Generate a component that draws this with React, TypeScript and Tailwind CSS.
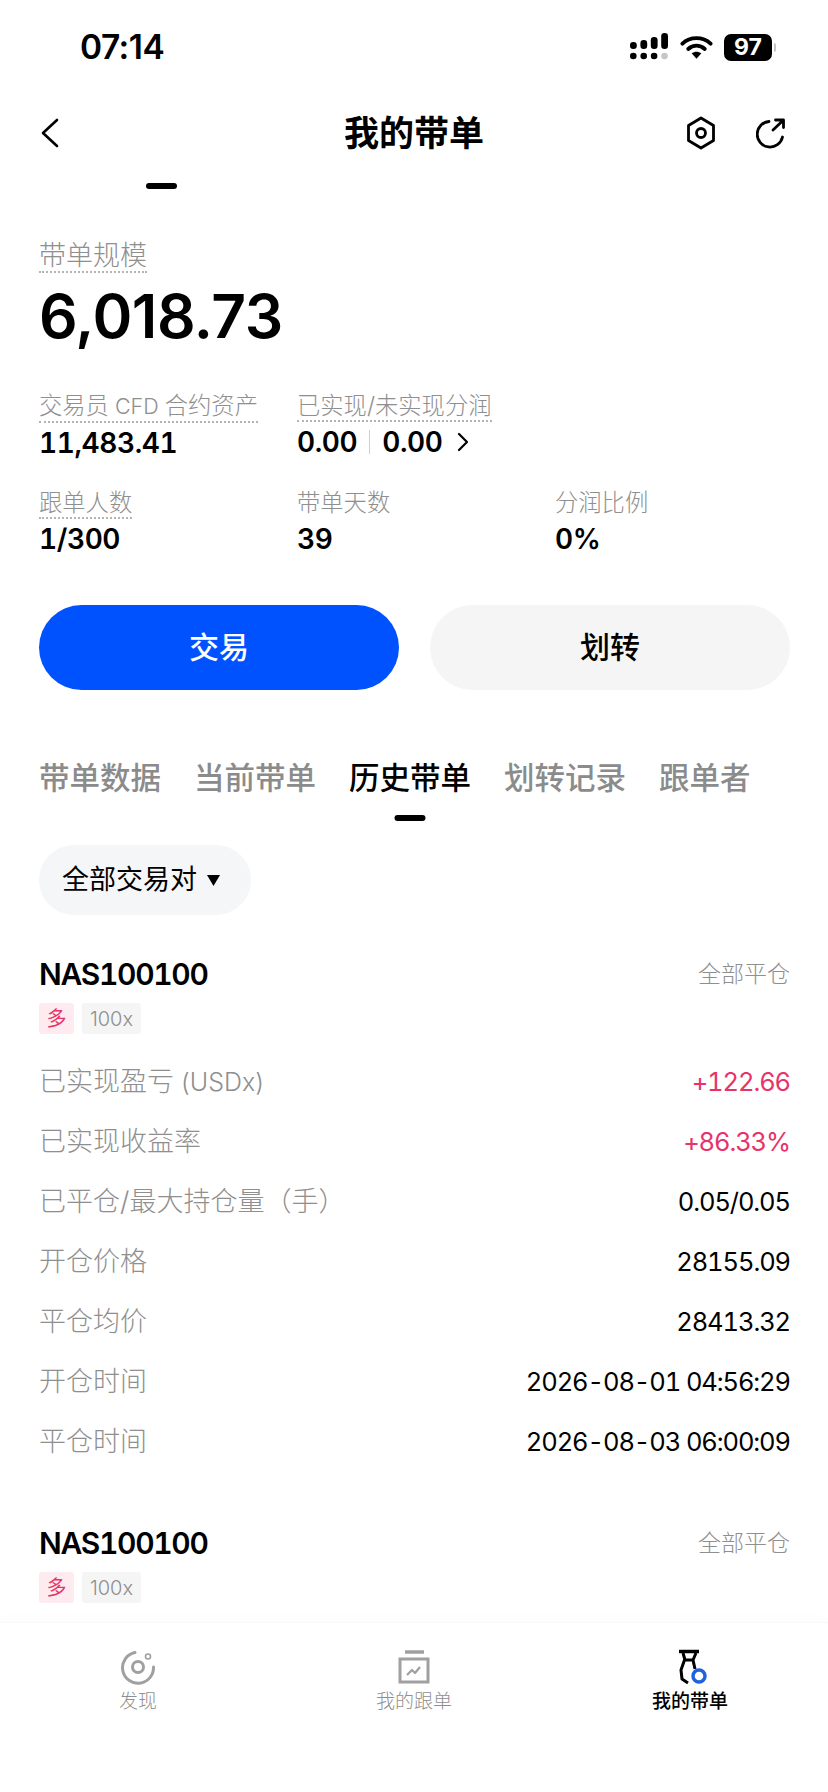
import React from "react";

const FONT = "[font-family:Inter,'Noto_Sans_CJK_SC',sans-serif]";

function Signal() {
  const bars = [
    [0, 13, 7],
    [10.4, 11, 9],
    [20.800, 8, 12],
    [31.200, 4, 16],
  ];
  return (
    <svg width="39" height="30" viewBox="0 0 39 30">
      {bars.map(([x, y, h], i) => (
        <rect key={i} x={x} y={y - 3} width="6.800" height={h} rx="3.200" fill="#000" />
      ))}
      {[0, 10.4, 20.8, 31.2].map((x, i) => (
        <circle key={x} cx={x + 3.3} cy="24" r="3.300" fill={i === 3 ? "#c6c6c6" : "#000"} />
      ))}
    </svg>
  );
}

function Wifi() {
  return (
    <svg width="33" height="26" viewBox="0 0 34 26" fill="none" stroke="#000" strokeLinecap="round">
      <path d="M2.500 9.500C10.500 2 23.500 2 31.500 9.500" strokeWidth="4" />
      <path d="M8.500 15C13.500 10.500 20.500 10.500 25.500 15" strokeWidth="4" />
      <path d="M17 25l-5-5.500c3-2.200 7-2.200 10 0z" fill="#000" stroke="none" />
    </svg>
  );
}

function Stat({ label, dotted, children }: { label: React.ReactNode; dotted?: boolean; children: React.ReactNode }) {
  return (
    <div className="flex flex-col items-start">
      <span
        className={`text-[23.300px] leading-[27px] font-light text-[#8f8f8f] pb-[1px] ${
          dotted ? "border-b-2 border-dotted border-[#b4b4b4]" : "border-b-2 border-transparent"
        }`}
      >
        {label}
      </span>
      <div className="mt-[3px] flex items-center text-[28px] leading-[34px] font-semibold tabular-nums tracking-[-0.4px] text-black">{children}</div>
    </div>
  );
}

function Row({ label, value, color }: { label: React.ReactNode; value: string; color?: string }) {
  return (
    <div className="flex h-[60px] items-center justify-between">
      <span className="text-[27px] font-light text-[#8f8f8f]">{label}</span>
      <span className={`text-[25.500px] tabular-nums tracking-[-1.1px] ${color ?? "text-black"}`}>{value}</span>
    </div>
  );
}

function CardHead() {
  return (
    <div>
      <div className="flex items-center justify-between">
        <span className="text-[30px] leading-[36px] font-semibold tabular-nums tracking-[-1.3px] text-black">NAS100100</span>
        <span className="text-[23px] leading-[36px] font-light text-[#8f8f8f]">全部平仓</span>
      </div>
      <div className="mt-[11px] flex gap-[8px]">
        <span className="flex h-[31px] w-[35px] items-center justify-center rounded-[3px] bg-[#fdebf0] text-[20px] text-[#e8336a]">多</span>
        <span className="flex h-[31px] w-[59px] items-center justify-center rounded-[3px] bg-[#f5f5f5] text-[20px] font-light text-[#8f8f8f]">100x</span>
      </div>
    </div>
  );
}

export default function App() {
  const tabs = ["带单数据", "当前带单", "历史带单", "划转记录", "跟单者"];
  return (
    <div className={`flex h-[1792px] w-[828px] flex-col overflow-hidden bg-white text-black ${FONT}`}>
      <div className="flex-1 overflow-hidden">
        {/* status bar */}
        <div className="flex h-[94px] items-center justify-between pl-[80px] pr-[52px]">
          <span className="text-[33.500px] font-semibold tracking-[-0.5px]">07:14</span>
          <div className="flex items-center gap-[11px]">
            <Signal />
            <Wifi />
            <div className="flex items-center">
              <span className="flex h-[27px] w-[48px] items-center justify-center rounded-[7px] bg-black text-[23px] font-bold text-white">97</span>
              <span className="ml-[2px] h-[9px] w-[2px] rounded-r-full bg-[#c4c4c4]" />
            </div>
          </div>
        </div>
        {/* header */}
        <div className="relative flex h-[78px] items-center justify-between pl-[40px] pr-[42px]">
          <svg width="20" height="32" viewBox="0 0 20 32" fill="none" stroke="#000" strokeWidth="2.600" strokeLinecap="round" strokeLinejoin="round">
            <path d="M17 3L3 16l14 13" />
          </svg>
          <span className="absolute left-1/2 -translate-x-1/2 text-[35px] font-semibold">我的带单</span>
          <div className="flex items-center gap-[40px]">
            <svg width="30" height="34" viewBox="0 0 30 34" fill="none" stroke="#000" strokeWidth="2.800" strokeLinejoin="round">
              <path d="M15 2l12.500 7.500v15L15 32 2.500 24.500v-15z" />
              <circle cx="15" cy="17" r="4.500" />
            </svg>
            <svg width="30" height="32" viewBox="0 0 30 32" fill="none" stroke="#000" strokeWidth="2.800" strokeLinecap="round" strokeLinejoin="round">
              <path d="M13 4.500A12.800 12.800 0 1 0 26.500 20" />
              <path d="M17 13L27 3.500M19.500 3H27.500V10.500" />
            </svg>
          </div>
        </div>
        <div className="ml-[146px] mt-[11px] h-[6px] w-[31px] rounded-full bg-black" />

        {/* scale */}
        <div className="mt-[52px] pl-[39px] pr-[38px]">
          <span className="inline-block border-b-2 border-dotted border-[#b4b4b4] text-[27px] leading-[30px] font-light text-[#8f8f8f]">带单规模</span>
          <div className="mt-[7px] text-[60.500px] leading-[72px] font-semibold tracking-[-0.5px]">6,018.73</div>
        </div>

        {/* stats */}
        <div className="mt-[40px] grid grid-cols-[258px_258px_1fr] gap-y-[29px] pl-[39px] pr-[38px]">
          <Stat label={<>交易员<span className="text-[21.500px]"> CFD </span>合约资产</>} dotted>11,483.41</Stat>
          <Stat label="已实现/未实现分润" dotted>
            <span>0.00</span>
            <span className="mx-[12px] h-[24px] w-[1px] bg-[#cfcfcf]" />
            <span>0.00</span>
            <svg className="ml-[14px]" width="12" height="20" viewBox="0 0 12 20" fill="none" stroke="#000" strokeWidth="2.200" strokeLinecap="round" strokeLinejoin="round">
              <path d="M2 2l8 8-8 8" />
            </svg>
          </Stat>
          <div />
          <Stat label="跟单人数" dotted>1/300</Stat>
          <Stat label="带单天数">39</Stat>
          <Stat label="分润比例">0%</Stat>
        </div>

        {/* buttons */}
        <div className="mt-[49px] flex gap-[31px] pl-[39px] pr-[38px]">
          <button className="flex h-[85px] w-[360px] items-center justify-center rounded-full bg-[#0052ff] text-[30px] font-medium text-white">交易</button>
          <button className="flex h-[85px] flex-1 items-center justify-center rounded-full bg-[#f5f5f5] text-[30px] font-medium text-black">划转</button>
        </div>

        {/* tabs */}
        <div className="mt-[65px] flex gap-[33px] pl-[39px] pr-[38px]">
          {tabs.map((t, i) => (
            <div key={t} className="relative h-[52px]">
              <span className={`text-[30.500px] leading-[46px] font-medium ${i === 2 ? "text-black" : "text-[#8b8b8b]"}`}>{t}</span>
              {i === 2 && <span className="absolute left-1/2 top-[60px] h-[6px] w-[31px] -translate-x-1/2 rounded-full bg-black" />}
            </div>
          ))}
        </div>

        {/* filter */}
        <div className="mt-[38px] pl-[39px] pr-[38px]">
          <div className="flex h-[70px] w-[212px] items-center gap-[10px] rounded-full bg-[#f5f6f7] pl-[23px]">
            <span className="text-[27px]">全部交易对</span>
            <svg width="13" height="11" viewBox="0 0 13 11">
              <path d="M0 0h13L6.500 11z" fill="#000" />
            </svg>
          </div>
        </div>

        {/* card 1 */}
        <div className="mt-[41px] pl-[39px] pr-[38px]">
          <CardHead />
          <div className="mt-[18px]">
            <Row label={<>已实现盈亏<span className="text-[25px]"> (USDx)</span></>} value="+122.66" color="text-[#e8336a]" />
            <Row label="已实现收益率" value="+86.33%" color="text-[#e8336a]" />
            <Row label="已平仓/最大持仓量（手）" value="0.05/0.05" />
            <Row label="开仓价格" value="28155.09" />
            <Row label="平仓均价" value="28413.32" />
            <Row label="开仓时间" value="2026-08-01 04:56:29" />
            <Row label="平仓时间" value="2026-08-03 06:00:09" />
          </div>
        </div>

        {/* card 2 */}
        <div className="mt-[53px] pl-[39px] pr-[38px]">
          <CardHead />
        </div>
      </div>

      {/* bottom nav */}
      <nav className="grid h-[170px] shrink-0 grid-cols-3 border-t border-[#f8f8f8] bg-white pt-[26px] shadow-[0_-6px_10px_rgba(0,0,0,0.012)]">
        <div className="flex flex-col items-center">
          <svg width="36" height="36" viewBox="0 0 36 36" fill="none" stroke="#a0a0a0">
            <path d="M15 3.500A15.500 15.500 0 1 0 33.500 18" strokeWidth="3" strokeLinecap="round" />
            <circle cx="18" cy="18" r="5.500" strokeWidth="3" />
            <circle cx="28" cy="7.500" r="2.500" strokeWidth="1.600" />
          </svg>
          <span className="mt-[5px] text-[19px] leading-[24px] font-light text-[#8f8f8f]">发现</span>
        </div>
        <div className="flex flex-col items-center">
          <svg width="36" height="36" viewBox="0 0 36 36" fill="none" stroke="#a0a0a0">
            <path d="M9 3h19" strokeWidth="3.500" />
            <rect x="4" y="10" width="28" height="23" strokeWidth="3" />
            <path d="M11 26l5-5 3 3 5-6" strokeWidth="2.200" strokeLinejoin="round" />
          </svg>
          <span className="mt-[5px] text-[19px] leading-[24px] font-light text-[#8f8f8f]">我的跟单</span>
        </div>
        <div className="flex flex-col items-center">
          <svg width="36" height="36" viewBox="0 0 36 36" fill="none">
            <path d="M7 2.500h20" stroke="#000" strokeWidth="3.500" />
            <path d="M11 4l2 7h8l3-7M12.500 11L9 21l1 9 6 4M21 11l2 9" stroke="#000" strokeWidth="3" strokeLinejoin="round" />
            <circle cx="27" cy="27" r="6" stroke="#1f62e0" strokeWidth="3.500" fill="#fff" />
          </svg>
          <span className="mt-[5px] text-[19px] leading-[24px] font-medium text-black">我的带单</span>
        </div>
      </nav>
    </div>
  );
}
